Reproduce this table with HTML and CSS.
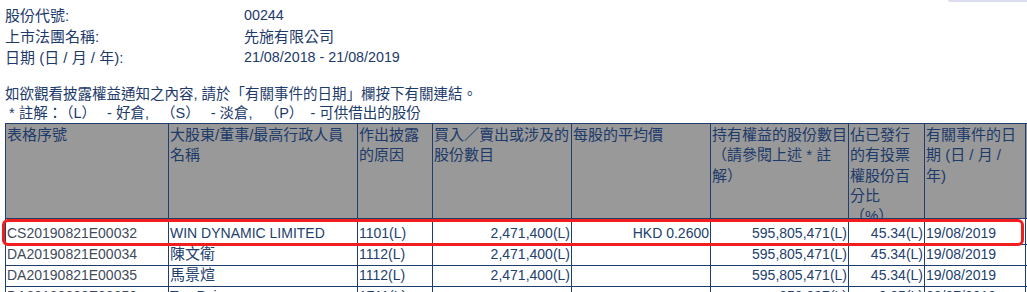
FILE: index.html
```html
<!DOCTYPE html>
<html lang="zh-Hant">
<head>
<meta charset="utf-8">
<title>披露權益</title>
<link rel="stylesheet" href="styles.css">
</head>
<body>
<div class="topbar"></div>
<div class="page">
  <div class="info">
    <div class="label">股份代號:</div><div class="value lt">00244</div>
    <div class="label">上市法團名稱:</div><div class="value">先施有限公司</div>
    <div class="label">日期 (日 / 月 / 年):</div><div class="value lt">21/08/2018 - 21/08/2019</div>
  </div>
  <p class="intro">如欲觀看披露權益通知之內容, 請於「有關事件的日期」欄按下有關連結。<br>&nbsp;* 註解：<span class="tag">（L）</span>&nbsp; - 好倉,&nbsp; <span class="tag">（S）</span>&nbsp; - 淡倉,&nbsp; <span class="tag">（P）</span>&nbsp;- 可供借出的股份</p>
  <div class="tablewrap">
    <table class="grid">
      <colgroup>
        <col class="c1"><col class="c2"><col class="c3"><col class="c4"><col class="c5"><col class="c6"><col class="c7"><col class="c8"><col class="c9">
      </colgroup>
      <thead>
        <tr>
          <th><div class="hd">表格序號</div></th>
          <th><div class="hd">大股東/董事/最高行政人員名稱</div></th>
          <th><div class="hd">作出披露的原因</div></th>
          <th><div class="hd">買入／賣出或涉及的股份數目</div></th>
          <th><div class="hd">每股的平均價</div></th>
          <th><div class="hd w6">持有權益的股份數目（請參閱上述 * 註解）</div></th>
          <th><div class="hd w7">佔已發行的有投票權股份百分比（%）</div></th>
          <th><div class="hd w8">有關事件的日期 (日 / 月 / 年)</div></th>
          <th><div class="hd">相關法團</div></th>
        </tr>
      </thead>
      <tbody>
        <tr class="first">
          <td class="code">CS20190821E00032</td>
          <td>WIN DYNAMIC LIMITED</td>
          <td>1101(L)</td>
          <td class="r">2,471,400(L)</td>
          <td class="r">HKD 0.2600</td>
          <td class="r">595,805,471(L)</td>
          <td class="r">45.34(L)</td>
          <td>19/08/2019</td>
          <td></td>
        </tr>
        <tr>
          <td class="code">DA20190821E00034</td>
          <td class="zh">陳文衛</td>
          <td>1112(L)</td>
          <td class="r">2,471,400(L)</td>
          <td class="r"></td>
          <td class="r">595,805,471(L)</td>
          <td class="r">45.34(L)</td>
          <td>19/08/2019</td>
          <td></td>
        </tr>
        <tr>
          <td class="code">DA20190821E00035</td>
          <td class="zh">馬景煊</td>
          <td>1112(L)</td>
          <td class="r">2,471,400(L)</td>
          <td class="r"></td>
          <td class="r">595,805,471(L)</td>
          <td class="r">45.34(L)</td>
          <td>19/08/2019</td>
          <td></td>
        </tr>
        <tr>
          <td class="code">DA20190820E00050</td>
          <td>Tan Pei</td>
          <td>1711(L)</td>
          <td class="r"></td>
          <td class="r"></td>
          <td class="r">350,997(L)</td>
          <td class="r">0.05(L)</td>
          <td>20/07/2019</td>
          <td></td>
        </tr>
      </tbody>
    </table>
    <div class="highlight"></div>
  </div>
</div>
</body>
</html>
```

FILE: styles.css
```css
html {
  overflow: hidden;
}

body {
  margin: 0;
  font-family: "Liberation Sans", "Noto Sans CJK TC", sans-serif;
  font-size: 15px;
  color: #1c3a6a;
  background: #ffffff;
}

.topbar {
  position: absolute;
  top: 0;
  right: 0;
  width: 79px;
  height: 2px;
  background: #dcdcf0;
  border-radius: 0 0 0 3px;
}

.page {
  padding: 5px 0 0 5px;
}

.info {
  display: grid;
  grid-template-columns: 239px auto;
  line-height: 21px;
}

.info .lt {
  font-size: 14.3px;
}

.intro {
  margin: 17px 0 0;
  line-height: 19px;
  font-size: 14.5px;
}

.intro .tag {
  margin: 0 3px 0 4px;
}

.tablewrap {
  position: relative;
}

.grid {
  border-collapse: collapse;
  table-layout: fixed;
  width: 1201px;
}

.c1 { width: 163px; }
.c2 { width: 189px; }
.c3 { width: 75px; }
.c4 { width: 139px; }
.c5 { width: 139px; }
.c6 { width: 138px; }
.c7 { width: 76px; }
.c8 { width: 101px; }
.c9 { width: 180px; }

.grid th {
  background: #999999;
  border: 1px solid #1e3f6e;
  padding: 0 1px;
  vertical-align: top;
  text-align: left;
  font-weight: normal;
  color: #1c3a6a;
}

.hd {
  height: 93px;
  padding-top: 1px;
  line-height: 20.3px;
}

.hd.w6 { width: 136px; }
.hd.w7 { width: 62px; }
.hd.w8 { width: 96px; }

.grid td {
  border: 1px solid #1e3f6e;
  padding: 2px 1px 4px;
  line-height: 14px;
  font-size: 14px;
  white-space: nowrap;
  vertical-align: top;
  text-align: left;
  color: #22406e;
}

.grid td.zh {
  font-size: 15px;
}

.grid td.r {
  text-align: right;
}

.grid td.code {
  color: #414a5a;
}

.grid tr.first td {
  padding-top: 7px;
  padding-bottom: 4px;
}

.highlight {
  position: absolute;
  left: -3px;
  top: 96px;
  width: 1022px;
  height: 27px;
  box-sizing: border-box;
  border: 3px solid #f01e1e;
  border-radius: 6px;
}
```
